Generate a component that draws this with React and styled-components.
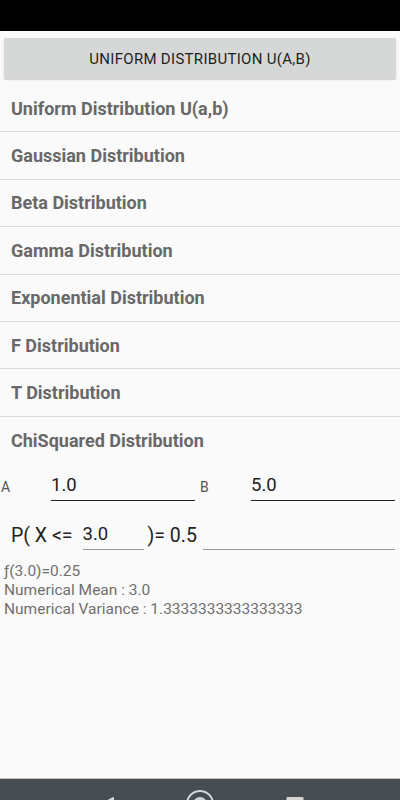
import React from "react";
import styled, { createGlobalStyle } from "styled-components";

const GlobalStyle = createGlobalStyle`
  html, body { margin: 0; padding: 0; background: #fafafa; }
  body { font-family: Roboto, "Noto Sans", "Liberation Sans", sans-serif; }
  * { box-sizing: border-box; }
`;

const Screen = styled.div`
  width: 400px;
  height: 800px;
  display: flex;
  flex-direction: column;
  background: #fafafa;
  overflow: hidden;
`;

const StatusBar = styled.div`
  height: 31px;
  flex: none;
  background: #000;
`;

const Content = styled.div`
  flex: 1;
  display: flex;
  flex-direction: column;
`;

const TopButton = styled.button`
  margin: 7px 4px 0;
  height: 41px;
  border: none;
  border-radius: 2px;
  background: #d6d7d7;
  box-shadow: 0 1px 1.5px rgba(0, 0, 0, 0.18);
  font-family: Roboto, sans-serif;
  font-weight: 400;
  font-size: 15px;
  color: #1f1f1f;
  text-transform: uppercase;
  letter-spacing: 0.3px;
  padding: 0;
`;

const List = styled.ul`
  list-style: none;
  margin: 6px 0 0;
  padding: 0;
`;

const ListItem = styled.li`
  height: 47.4px;
  display: flex;
  align-items: center;
  padding-left: 11px;
  font-size: 18px;
  font-weight: 700;
  color: #686868;
  border-bottom: ${(p) => (p.$last ? "none" : "1px solid #dcdcdc")};
`;

const ParamRow = styled.div`
  display: flex;
  align-items: center;
  margin-top: 7px;
  padding-left: 1px;
`;

const ParamLabel = styled.span`
  width: ${(p) => p.$w}px;
  flex: none;
  font-size: 14px;
  color: #555;
  padding-top: 2px;
`;

const Field = styled.div`
  width: ${(p) => (p.$w ? `${p.$w}px` : "auto")};
  flex: ${(p) => (p.$w ? "none" : "1")};
  height: 30px;
  display: flex;
  align-items: center;
  font-size: 18.5px;
  color: #222;
  border-bottom: ${(p) => (p.$dim ? "1px solid #9a9a9a" : "1.5px solid #222")};
  padding-bottom: 1px;
`;

const Gap = styled.span`
  width: ${(p) => p.$w}px;
  flex: none;
`;

const ProbRow = styled.div`
  display: flex;
  align-items: center;
  margin-top: 19px;
  padding: 0 5px 0 11px;
`;

const ProbText = styled.span`
  font-size: 19.5px;
  color: #222;
  white-space: pre;
`;

const Results = styled.div`
  margin-top: 12px;
  padding-left: 4px;
  font-size: 15.5px;
  line-height: 19px;
  color: #707070;
`;

const NavBar = styled.div`
  height: 22px;
  flex: none;
  background: #454c52;
  border-top: 1px solid #b9bcbe;
  display: flex;
  justify-content: center;
  gap: 67px;
  padding-top: 11px;
  overflow: hidden;
`;

const NavIcon = styled.svg`
  width: 28px;
  height: 28px;
  flex: none;
`;

export default function App() {
  const items = [
    "Uniform Distribution U(a,b)",
    "Gaussian Distribution",
    "Beta Distribution",
    "Gamma Distribution",
    "Exponential Distribution",
    "F Distribution",
    "T Distribution",
    "ChiSquared Distribution",
  ];
  return (
    <>
      <GlobalStyle />
      <Screen>
        <StatusBar />
        <Content>
          <TopButton>Uniform Distribution U(a,b)</TopButton>
          <List>
            {items.map((t, i) => (
              <ListItem key={t} $last={i === items.length - 1}>
                {t}
              </ListItem>
            ))}
          </List>
          <ParamRow>
            <ParamLabel $w={50}>A</ParamLabel>
            <Field $w={144}>1.0</Field>
            <Gap $w={5} />
            <ParamLabel $w={51}>B</ParamLabel>
            <Field $w={144}>5.0</Field>
          </ParamRow>
          <ProbRow>
            <ProbText>P( X &lt;=</ProbText>
            <Gap $w={10} />
            <Field $w={61} $dim>3.0</Field>
            <Gap $w={4} />
            <ProbText>)= 0.5</ProbText>
            <Gap $w={6} />
            <Field $dim />
          </ProbRow>
          <Results>
            <div>ƒ(3.0)=0.25</div>
            <div>Numerical Mean : 3.0</div>
            <div>Numerical Variance : 1.3333333333333333</div>
          </Results>
        </Content>
        <NavBar>
          <NavIcon viewBox="0 0 28 28">
            <path d="M22 8 L6 17 L22 26 Z" fill="none" stroke="#d2d4d5" strokeWidth="2" strokeLinejoin="round" />
          </NavIcon>
          <NavIcon viewBox="0 0 28 28">
            <circle cx="14" cy="14" r="13" fill="none" stroke="#d2d4d5" strokeWidth="2" />
            <circle cx="14" cy="14" r="7" fill="#d2d4d5" />
          </NavIcon>
          <NavIcon viewBox="0 0 28 28">
            <rect x="5.5" y="7" width="17" height="17" rx="1" fill="#d2d4d5" />
          </NavIcon>
        </NavBar>
      </Screen>
    </>
  );
}
